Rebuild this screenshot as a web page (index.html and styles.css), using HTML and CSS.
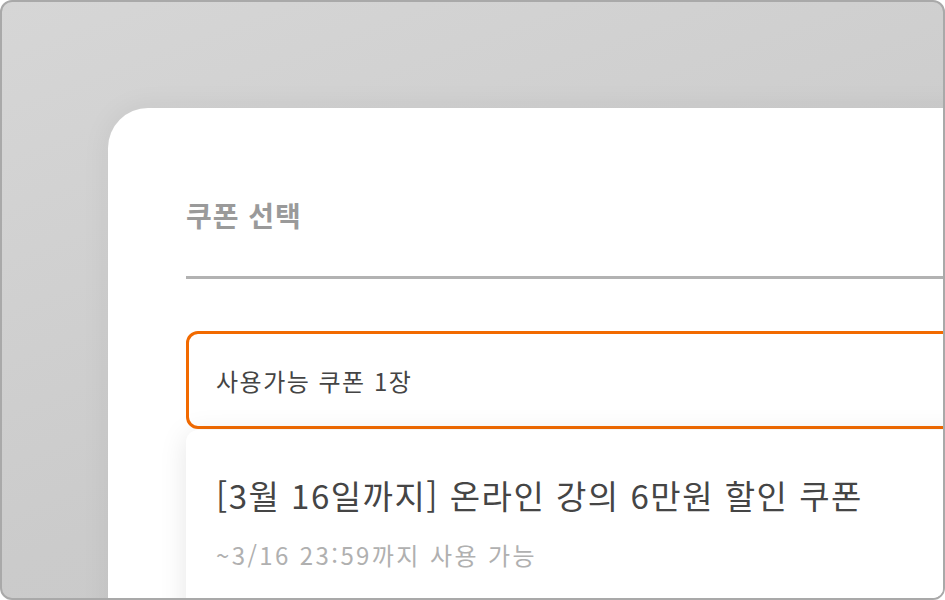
FILE: index.html
```html
<!DOCTYPE html>
<html lang="ko">
<head>
<meta charset="utf-8">
<title>쿠폰 선택</title>
<link rel="stylesheet" href="styles.css">
</head>
<body>
<div class="frame">
  <div class="panel">
    <h2 class="title">쿠폰 선택</h2>
    <div class="select">사용가능 쿠폰 1장</div>
    <div class="dropdown">
      <div class="option-name">[3월 16일까지] 온라인 강의 6만원 할인 쿠폰</div>
      <div class="option-date">~3/16 23:59까지 사용 가능</div>
    </div>
  </div>
</div>
</body>
</html>
```
FILE: styles.css
```css
html, body {
  margin: 0;
  padding: 0;
  background: #ffffff;
}
body {
  font-family: "Noto Sans CJK KR", "Noto Sans", sans-serif;
}
.frame {
  box-sizing: border-box;
  width: 945px;
  height: 600px;
  border: 2px solid #a9a9a9;
  border-radius: 12px;
  overflow: hidden;
  background: linear-gradient(160deg, #d6d6d6 0%, #cbcbcb 60%, #c8c8c8 100%);
  padding: 106px 0 0 106px;
}
.panel {
  box-sizing: border-box;
  width: 1000px;
  height: 600px;
  background: #ffffff;
  border-top-left-radius: 40px;
  padding: 87px 0 0 78px;
  box-shadow: 0 0 30px rgba(0, 0, 0, 0.06);
}
.title {
  margin: 0;
  font-size: 28px;
  line-height: 40px;
  font-weight: 700;
  letter-spacing: 1px;
  color: #9a9a9a;
  padding-bottom: 41px;
  border-bottom: 3px solid #b2b2b2;
}
.select {
  box-sizing: border-box;
  margin-top: 52px;
  height: 98px;
  border: 3px solid #f26a00;
  border-radius: 12px;
  padding: 0 27px;
  display: flex;
  align-items: center;
  font-size: 24px;
  letter-spacing: 1.5px;
  color: #444444;
}
.dropdown {
  margin-top: 1px;
  background: #ffffff;
  border-radius: 12px;
  padding: 42px 30px 40px 30px;
  box-shadow: 0 4px 28px rgba(0, 0, 0, 0.10);
  height: 200px;
}
.option-name {
  font-size: 33px;
  line-height: 46px;
  letter-spacing: 1.5px;
  color: #454545;
}
.option-date {
  margin-top: 20px;
  font-size: 24px;
  line-height: 34px;
  letter-spacing: 2.4px;
  color: #b0b0b0;
}
```
